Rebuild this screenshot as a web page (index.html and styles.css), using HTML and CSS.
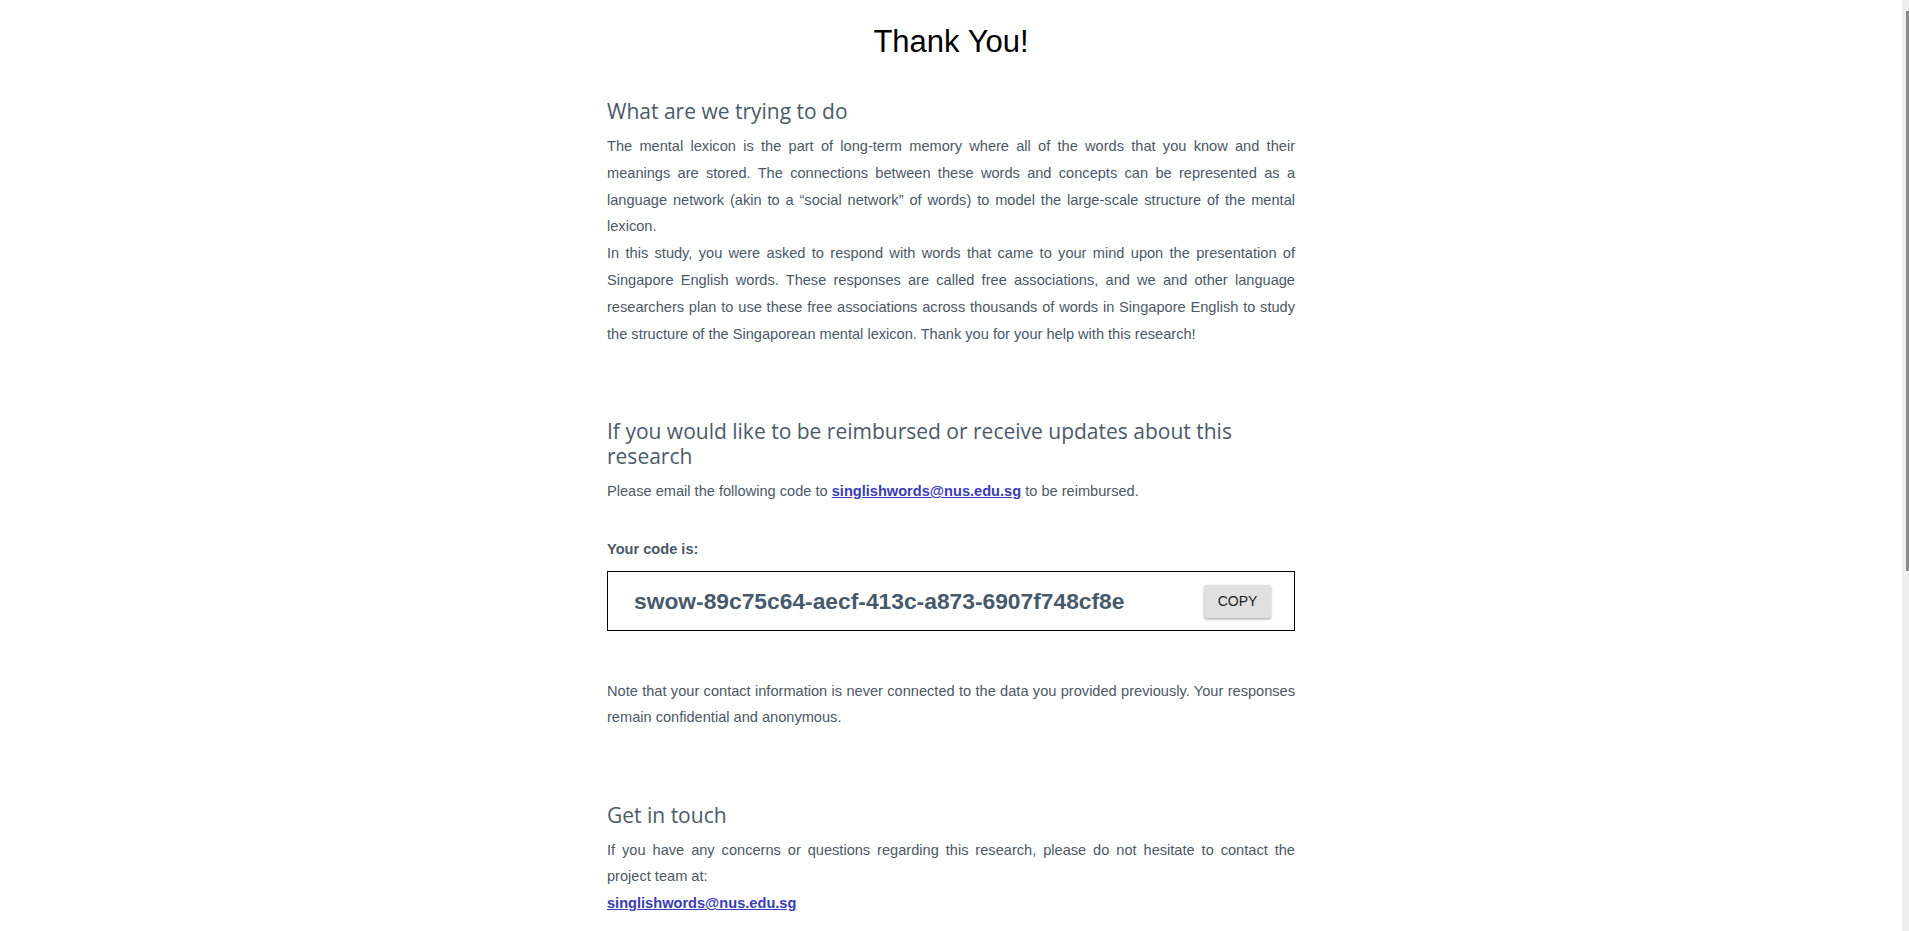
FILE: index.html
```html
<!DOCTYPE html>
<html lang="en">
<head>
<meta charset="utf-8">
<title>Thank You!</title>
<link rel="stylesheet" href="styles.css">
</head>
<body>
<main class="page">
  <h1 class="title">Thank You!</h1>

  <section class="section">
    <h2 class="heading">What are we trying to do</h2>
    <p class="text">The mental lexicon is the part of long-term memory where all of the words that you know and their meanings are stored. The connections between these words and concepts can be represented as a language network (akin to a “social network” of words) to model the large-scale structure of the mental lexicon.<br>In this study, you were asked to respond with words that came to your mind upon the presentation of Singapore English words. These responses are called free associations, and we and other language researchers plan to use these free associations across thousands of words in Singapore English to study the structure of the Singaporean mental lexicon. Thank you for your help with this research!</p>
  </section>

  <section class="section">
    <h2 class="heading">If you would like to be reimbursed or receive updates about this research</h2>
    <p class="text">Please email the following code to <a class="mail" href="mailto:singlishwords@nus.edu.sg">singlishwords@nus.edu.sg</a> to be reimbursed.</p>
    <p class="label">Your code is:</p>
    <div class="codebox">
      <span class="code">swow-89c75c64-aecf-413c-a873-6907f748cf8e</span>
      <button class="copy" type="button">Copy</button>
    </div>
    <p class="text note">Note that your contact information is never connected to the data you provided previously. Your responses remain confidential and anonymous.</p>
  </section>

  <section class="section">
    <h2 class="heading">Get in touch</h2>
    <p class="text contact">If you have any concerns or questions regarding this research, please do not hesitate to contact the project team at:<br><a class="mail" href="mailto:singlishwords@nus.edu.sg">singlishwords@nus.edu.sg</a></p>
  </section>
</main>
<div class="scrollbar" aria-hidden="true"><div class="scrollbar-thumb"></div></div>
</body>
</html>
```

FILE: styles.css
```css
html {
  background: #ffffff;
}

body {
  margin: 0;
  padding-right: 7px;
  font-family: "Liberation Sans", Arial, sans-serif;
  color: #4b5866;
}

.page {
  width: 688px;
  margin: 0 auto;
  padding: 24px 0 60px;
}

.title {
  margin: 0;
  font-family: "Liberation Sans", Arial, sans-serif;
  font-size: 31px;
  line-height: 36px;
  font-weight: 400;
  color: #000000;
  text-align: center;
}

.section {
  margin-top: 39px;
}

.section + .section {
  margin-top: 72px;
}

.heading {
  margin: 0 0 9px;
  font-family: "Open Sans", "Noto Sans", sans-serif;
  font-size: 21px;
  line-height: 25px;
  font-weight: 400;
  color: #4b5a69;
}

.text {
  margin: 0;
  font-size: 14.6px;
  line-height: 26.8px;
  text-align: justify;
  color: #4b5866;
}

.mail {
  color: #3a3cb8;
  font-weight: 700;
  text-decoration: underline;
}

.label {
  margin: 31px 0 8.5px;
  font-size: 14.6px;
  line-height: 26.8px;
  font-weight: 700;
  color: #4b5866;
}

.codebox {
  box-sizing: border-box;
  height: 60px;
  border: 1.5px solid #000000;
  display: flex;
  align-items: center;
  justify-content: space-between;
  padding: 0 23px 0 26px;
}

.code {
  font-size: 22.8px;
  font-weight: 700;
  color: #475a6c;
}

.copy {
  width: 67px;
  height: 33px;
  border: 0;
  border-radius: 3px;
  background: #e0e0e0;
  box-shadow: 0 1px 3px rgba(0, 0, 0, 0.22), 0 2px 2px rgba(0, 0, 0, 0.12);
  font-family: "Liberation Sans", Arial, sans-serif;
  font-size: 14px;
  text-transform: uppercase;
  color: #222222;
  padding: 0;
}

.note {
  margin-top: 48px;
  line-height: 25.6px;
}

.contact {
  margin-top: 5px;
}

.scrollbar {
  position: fixed;
  top: 0;
  right: 0;
  width: 7px;
  height: 100vh;
  background: #efefef;
}

.scrollbar-thumb {
  position: absolute;
  top: 11px;
  left: 4px;
  width: 3px;
  height: 560px;
  background: #8a8a8a;
}
```
